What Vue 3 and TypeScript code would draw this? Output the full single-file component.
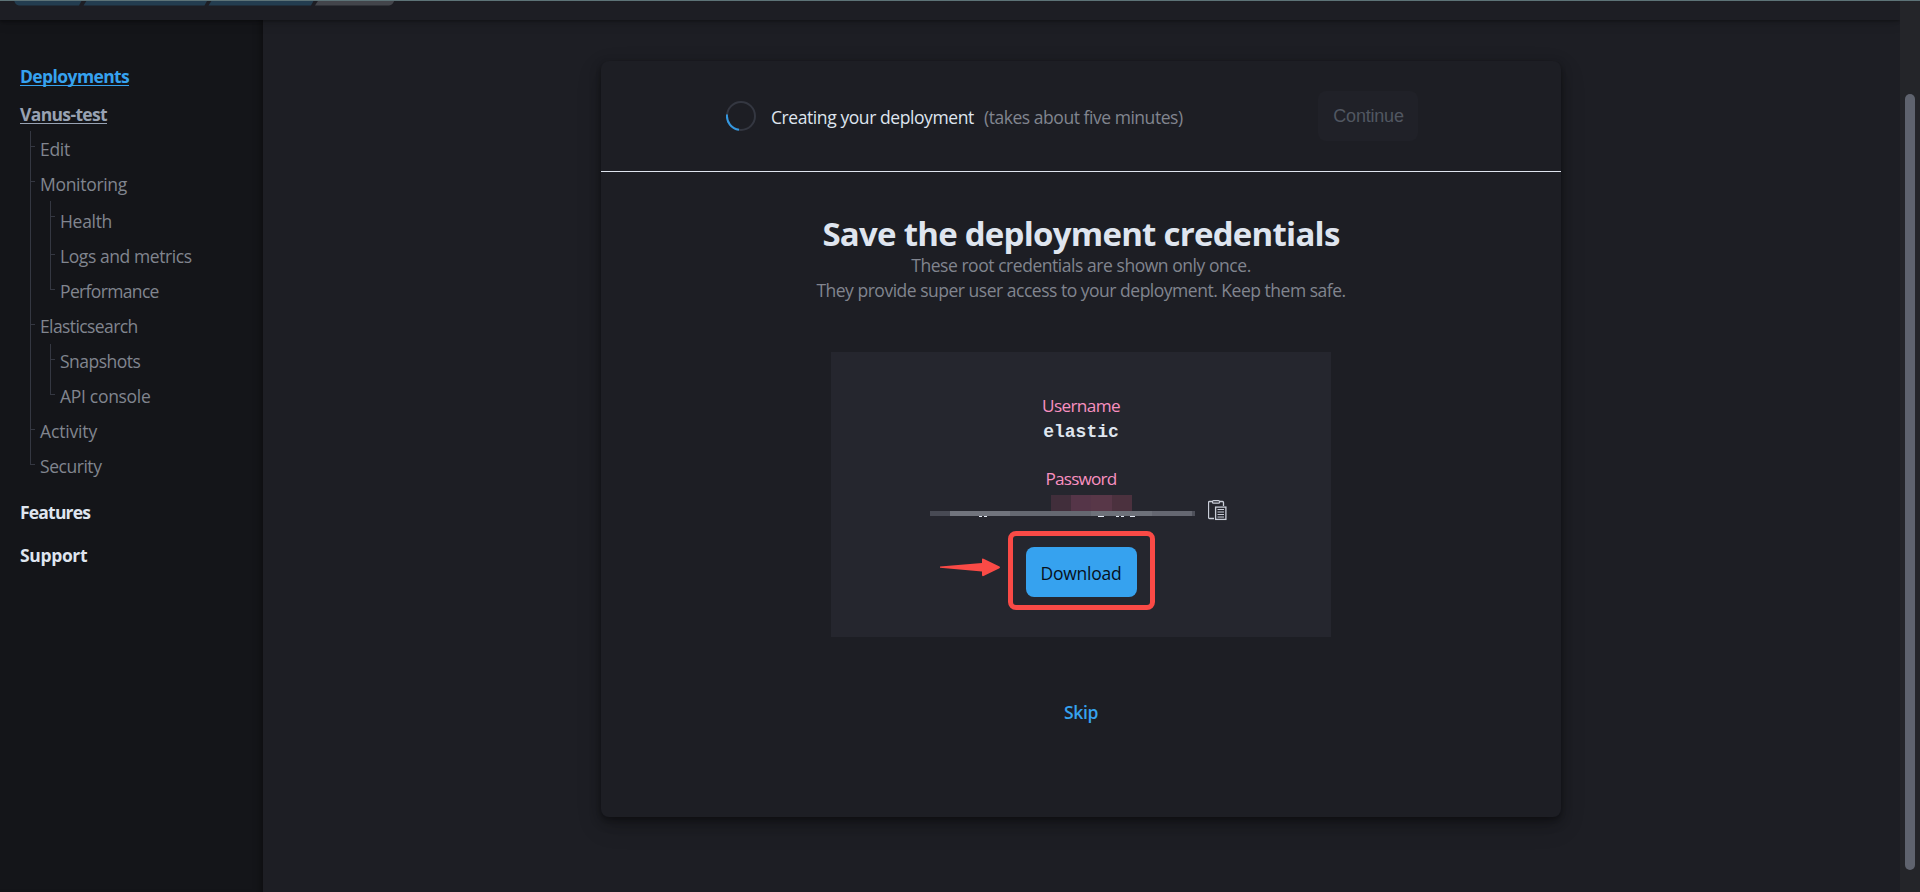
<script setup lang="ts">
interface NavItem {
  label: string
  cls: string
  children?: NavItem[]
}

const nav: NavItem[] = [
  { label: 'Edit', cls: 'edit low' },
  {
    label: 'Monitoring',
    cls: 'monitoring low',
    children: [
      { label: 'Health', cls: 'health' },
      { label: 'Logs and metrics', cls: 'logs' },
      { label: 'Performance', cls: 'performance' },
    ],
  },
  {
    label: 'Elasticsearch',
    cls: 'elasticsearch',
    children: [
      { label: 'Snapshots', cls: 'snapshots' },
      { label: 'API console', cls: 'api' },
    ],
  },
  { label: 'Activity', cls: 'activity' },
  { label: 'Security', cls: 'security' },
]
</script>

<template>
  <div class="app">
    <div class="view">
      <header class="topbar">
        <svg class="crumbs" width="400" height="6" viewBox="0 0 400 6">
          <path d="M14 0H82L79 5.5H19Q15 5 14 0Z" fill="#233d50" />
          <path d="M87 0H207.500L204.500 5.500H83.500Z" fill="#233d50" />
          <path d="M212 0H314L311 5.500H208.500Z" fill="#233d50" />
          <path d="M318.500 0H394.500Q393 5 389 5.500H315Z" fill="#43454b" />
          <rect width="400" height="1" fill="#5d7377" />
        </svg>
      </header>
      <div class="body">
        <nav class="sidebar">
          <a class="root"><span>Deployments</span></a>
          <a class="current"><span>Vanus-test</span></a>
          <ul class="tree">
            <li v-for="item in nav" :key="item.label">
              <a class="node" :class="item.cls"><span>{{ item.label }}</span></a>
              <ul v-if="item.children" class="sub">
                <li v-for="child in item.children" :key="child.label">
                  <a class="node" :class="child.cls"><span>{{ child.label }}</span></a>
                </li>
              </ul>
            </li>
          </ul>
          <a class="section features"><span>Features</span></a>
          <a class="section support"><span>Support</span></a>
        </nav>
        <main class="main">
          <section class="card">
            <div class="status">
              <svg class="spinner" width="30" height="30" viewBox="0 0 30 30" fill="none" stroke-width="2">
                <circle cx="15" cy="15" r="14" stroke="#343741" />
                <path d="M1 13.500A14 14 0 0 0 13 28.850" stroke="#3498e0" />
              </svg>
              <p class="state"><span class="creating">Creating your deployment</span><span class="takes">(takes about five minutes)</span></p>
              <button class="continue" disabled>Continue</button>
            </div>
            <div class="content">
              <h1><span>Save the deployment credentials</span></h1>
              <p class="hint hint-a"><span>These root credentials are shown only once.</span></p>
              <p class="hint hint-b"><span>They provide super user access to your deployment. Keep them safe.</span></p>
              <div class="panel">
                <div class="label username"><span>Username</span></div>
                <code class="value">elastic</code>
                <div class="label password"><span>Password</span></div>
                <div class="secret">
                  <svg class="mask" width="266" height="24" viewBox="0 0 266 24" shape-rendering="crispEdges">
                    <rect x="121" y="1" width="20" height="16" fill="#412e3b" />
                    <rect x="141" y="1" width="20" height="16" fill="#553548" />
                    <rect x="161" y="1" width="21" height="16" fill="#583748" />
                    <rect x="182" y="1" width="20" height="16" fill="#4b313e" />
                    <rect x="0" y="17" width="20" height="5" fill="#484a54" />
                    <rect x="20" y="17" width="60" height="5" fill="#71747d" />
                    <rect x="80" y="17" width="81" height="5" fill="#656871" />
                    <rect x="161" y="17" width="61" height="5" fill="#6e717a" />
                    <rect x="222" y="17" width="40" height="5" fill="#656771" />
                    <rect x="262" y="17" width="3" height="5" fill="#4e505a" />
                    <path d="M49 22h3v1h-3zM54 22h3v1h-3zM168 22h6v1h-6zM186 22h3v1h-3zM191 22h3v1h-3zM200 22h5v1h-5z" fill="#dfe5ef" />
                  </svg>
                  <svg class="copy" width="19" height="21" viewBox="0 0 19 21" fill="none" stroke="#c9cdd8">
                    <path d="M6 18.500H1.500Q.5 18.500 .5 17.500V2.500Q.5 1.500 1.500 1.500H4.500M11.500 1.500H14.500Q15.500 1.500 15.500 2.500V6" stroke-width="1.300" />
                    <rect x="4.500" y=".6" width="7" height="2.600" rx="1" stroke-width="1.200" />
                    <rect x="7.600" y="7.100" width="10.300" height="12.300" stroke-width="1.300" />
                    <path d="M9.500 9.500H16M9.500 12H16M9.500 14.500H16M9.500 17H16" />
                  </svg>
                </div>
                <div class="action">
                  <button class="download"><span>Download</span></button>
                  <div class="frame"></div>
                  <svg class="arrow" width="61" height="19" viewBox="0 0 61 19">
                    <path d="M0 8.500L42 5V1.500Q42 .2 43.500 .8L59 8.200Q61 9.300 59 10.500L43.500 18Q42 18.500 42 17V13.500L0 9.800Z" fill="#fa4a46" />
                  </svg>
                </div>
              </div>
              <a class="skip"><span>Skip</span></a>
            </div>
          </section>
        </main>
      </div>
    </div>
    <div class="scrollbar"><div class="thumb"></div></div>
  </div>
</template>

<style>
body {
  margin: 0;
  background: #1d1e24;
  overflow: hidden;
}
</style>

<style scoped>
.app {
  display: flex;
  width: 1920px;
  height: 892px;
  overflow: hidden;
  background: #1d1e24;
  color: #dfe5ef;
  font-family: 'Open Sans', 'Noto Sans', sans-serif;
  font-size: 17.5px;
  line-height: 25px;
}
.view {
  display: flex;
  flex-direction: column;
  width: 1900px;
  overflow: hidden;
}
.topbar {
  position: relative;
  z-index: 1;
  box-sizing: border-box;
  height: 20px;
  border-top: 1px solid #5d7377;
  background: #1d1e24;
  box-shadow: 0 1px 3px rgba(0, 0, 0, 0.35), 0 3px 12px rgba(0, 0, 0, 0.15);
}
.crumbs {
  display: block;
  margin-top: -1px;
}
.body {
  display: flex;
  flex: 1;
}
span {
  white-space: nowrap;
}
.sidebar {
  box-sizing: border-box;
  width: 263px;
  height: 872px;
  padding: 44px 0 0 20px;
  background: #141519;
  box-shadow: inset -8px 0 8px -7px rgba(0, 0, 0, 0.45);
}
.sidebar > a {
  display: block;
  font-weight: 700;
}
.root {
  height: 38px;
  color: #36a2ef;
  letter-spacing: -0.6px;
}
.current {
  height: 29px;
  color: #98a2b3;
  letter-spacing: -0.65px;
}
.root span,
.current span {
  display: inline-block;
  height: 21px;
  line-height: 25px;
  border-bottom: 1px solid currentColor;
}
ul {
  margin: 0;
  padding: 0;
  list-style: none;
}
.tree {
  margin-left: 10px;
}
.sub {
  margin-left: 20px;
}
li {
  position: relative;
}
li::before {
  content: '';
  position: absolute;
  left: 0;
  top: 0;
  width: 1px;
  height: 100%;
  background: #343741;
}
li:last-child::before {
  height: 15px;
}
li::after {
  content: '';
  position: absolute;
  left: 0;
  top: 15px;
  width: 5px;
  height: 1px;
  background: #343741;
}
.node {
  display: block;
  box-sizing: border-box;
  height: 35px;
  padding: 5px 0 0 10px;
  color: #81858f;
  letter-spacing: -0.3px;
}
.node.low {
  padding-top: 6px;
}
.node.health {
  height: 38px;
  padding-top: 8px;
}
.node.logs {
  letter-spacing: -0.42px;
}
.node.performance {
  letter-spacing: -0.65px;
}
.node.elasticsearch {
  letter-spacing: -0.6px;
}
.node.snapshots {
  letter-spacing: -0.5px;
}
.node.activity {
  letter-spacing: -0.15px;
}
.node.security {
  letter-spacing: -0.46px;
}
.section {
  height: 43px;
  color: #dfe5ef;
}
.features {
  margin-top: 16px;
  letter-spacing: -0.8px;
}
.support {
  letter-spacing: -0.35px;
}
.main {
  flex: 1;
  display: flex;
  align-items: flex-start;
  padding: 41px 0 0 338px;
}
.card {
  width: 960px;
  height: 756px;
  border-radius: 8px;
  background: #1d1e24;
  box-shadow: 0 2px 5px rgba(0, 0, 0, 0.25), 0 5px 12px rgba(0, 0, 0, 0.25), 0 9px 24px rgba(0, 0, 0, 0.18);
}
.status {
  display: flex;
  align-items: flex-start;
  box-sizing: border-box;
  height: 111px;
  padding: 30px 143px 0 125px;
  border-bottom: 1px solid #dfe5ef;
}
.spinner {
  margin-top: 10px;
}
.state {
  display: flex;
  flex: 1;
  margin: 14px 0 0 15px;
}
.creating {
  flex: none;
  width: 213px;
  letter-spacing: -0.42px;
}
.takes {
  color: #81858f;
  letter-spacing: -0.46px;
}
button {
  border: 0;
  padding: 0;
  border-radius: 8px;
}
.continue {
  width: 100px;
  height: 50px;
  background: #202128;
  color: #515761;
  font: 18px/50px 'Liberation Sans', sans-serif;
  letter-spacing: -0.2px;
  padding-left: 1px;
}
.content {
  display: flex;
  flex-direction: column;
  align-items: center;
}
h1 {
  margin: 41px 0 0;
  font-size: 33px;
  line-height: 42px;
  font-weight: 700;
  letter-spacing: -0.75px;
}
.hint {
  margin: 0;
  color: #81858f;
}
.hint-a {
  margin-top: -2px;
  letter-spacing: -0.45px;
}
.hint-b {
  letter-spacing: -0.485px;
}
.panel {
  display: flex;
  flex-direction: column;
  align-items: center;
  box-sizing: border-box;
  width: 500px;
  height: 285px;
  margin-top: 49px;
  padding-top: 41px;
  background: #25262e;
}
.label {
  color: #f990c0;
  font-size: 17.2px;
}
.username {
  letter-spacing: -0.65px;
}
.password {
  letter-spacing: -0.8px;
}
.value {
  height: 48px;
  font: 700 18px/28px 'Liberation Mono', monospace;
}
.secret {
  display: flex;
  align-items: flex-start;
  width: 302px;
  height: 31px;
  margin-top: 3px;
}
.mask {
  margin-right: 12px;
}
.copy {
  margin-top: 6px;
}
.action {
  position: relative;
  width: 111px;
  height: 50px;
  margin-top: auto;
  margin-bottom: 40px;
}
.download {
  width: 111px;
  height: 50px;
  background: #36a2ef;
  color: #07101a;
  font: 500 17.5px/52px 'Open Sans', 'Noto Sans', sans-serif;
  letter-spacing: -0.25px;
}
.frame {
  position: absolute;
  left: -18px;
  top: -16px;
  box-sizing: border-box;
  width: 147px;
  height: 79px;
  border: 5px solid #fa4a46;
  border-radius: 8px;
}
.arrow {
  position: absolute;
  left: -86px;
  top: 11px;
}
.skip {
  margin-top: 63px;
  color: #36a2ef;
  font-weight: 600;
  letter-spacing: -0.3px;
}
.scrollbar {
  width: 20px;
  box-sizing: border-box;
  padding: 93px 5px 0;
  border-top: 1px solid #5d7377;
  background: #242529;
}
.thumb {
  height: 776px;
  border-radius: 5px;
  background: #5f636e;
}
</style>
